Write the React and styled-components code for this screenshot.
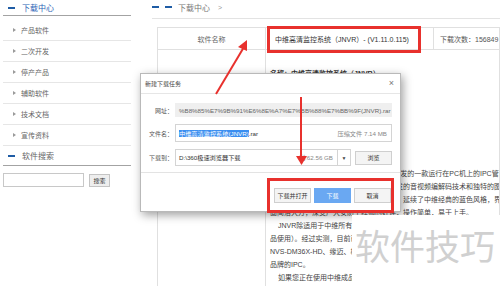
import React from 'react';
import styled, { createGlobalStyle } from 'styled-components';

const FONT = `"Liberation Sans", "Noto Sans CJK SC", sans-serif`;

const Global = createGlobalStyle`
  html, body { margin: 0; padding: 0; background: #fff; }
  body { width: 500px; height: 286px; overflow: hidden; font-family: ${FONT}; }
  * { box-sizing: border-box; }
`;

const Page = styled.div`
  position: relative;
  width: 500px;
  height: 286px;
  overflow: hidden;
  display: flex;
`;

/* ---------- sidebar ---------- */
const Sidebar = styled.aside`
  width: 128px;
  margin-left: 3px;
  flex: none;
  display: flex;
  flex-direction: column;
`;

const SectionHead = styled.div`
  height: ${p => p.$h}px;
  display: flex;
  align-items: center;
  gap: 7px;
  padding-left: 5px;
  border-bottom: 1px solid #a3a3a3;
  font-size: 8px;
  color: ${p => (p.$muted ? '#666' : '#2b63b5')};
`;

const Dash = styled.span`
  display: block;
  width: 7px;
  height: 2px;
  background: #1f5ca5;
  flex: none;
`;

const SideList = styled.ul`
  list-style: none;
  margin: 4px 0 0;
  padding: 0;
`;

const SideItem = styled.li`
  height: 21px;
  border-bottom: 1px solid #e6e6e6;
  display: flex;
  align-items: center;
  gap: 5px;
  padding-left: 10px;
  font-size: 7px;
  color: #666;
`;

const Tri = styled.span`
  width: 0;
  height: 0;
  border-left: 3px solid #9a9a9a;
  border-top: 2px solid transparent;
  border-bottom: 2px solid transparent;
`;

const SearchRow = styled.div`
  margin-top: 7px;
  display: flex;
  align-items: center;
  gap: 5px;
`;

const SearchInput = styled.div`
  width: 81px;
  height: 14px;
  border: 1px solid #c8c8c8;
  background: #fff;
`;

const SearchBtn = styled.div`
  width: 21px;
  height: 13px;
  border: 1px solid #c4c4c4;
  background: #eee;
  font-size: 6px;
  color: #333;
  display: flex;
  align-items: center;
  justify-content: center;
`;

/* ---------- main ---------- */
const Main = styled.main`
  flex: 1;
  min-width: 0;
  margin-left: 21px;
  display: flex;
  flex-direction: column;
`;

const Crumb = styled.div`
  height: 19px;
  padding-bottom: 4px;
  border-bottom: 1px solid #e3e3e3;
  display: flex;
  align-items: center;
  gap: 6px;
  font-size: 8px;
  color: #777;
  flex: none;
`;

const CrumbSep = styled.span`
  margin-left: 2px;
  font-size: 7px;
  color: #999;
`;

const Table = styled.div`
  flex: 1;
  margin: 8px 0 0 5px;
  display: grid;
  grid-template-columns: 108px 168px 1fr;
  grid-template-rows: 22px 1fr;
  border-left: 1px solid #e0e0e0;
  border-top: 1px solid #e0e0e0;
  min-width: 0;
`;

const Cell = styled.div`
  border-right: 1px solid #e0e0e0;
  border-bottom: ${p => (p.$last ? 'none' : '1px solid #e0e0e0')};
  grid-column: ${p => (p.$span ? `span ${p.$span}` : 'auto')};
  display: flex;
  align-items: ${p => (p.$top ? 'flex-start' : 'center')};
  justify-content: ${p => (p.$center ? 'center' : 'flex-start')};
  padding-left: ${p => p.$pl || 0}px;
  font-size: 7px;
  color: ${p => p.$color || '#555'};
  white-space: nowrap;
  overflow: hidden;
  min-width: 0;
`;

const Body = styled.div`
  display: flex;
  flex-direction: column;
  padding-top: 17px;
`;

const Line = styled.div`
  height: 13px;
  line-height: 13px;
  font-size: 7px;
  color: ${p => (p.$bold ? '#333' : '#444')};
  font-weight: ${p => (p.$bold ? 700 : 400)};
  padding-left: ${p => (p.$indent ? 8 : 0)}px;
  white-space: nowrap;
`;

const Desc = styled.div`
  margin-top: 87px;
`;

/* ---------- dialog ---------- */
const Dialog = styled.div`
  position: absolute;
  left: 140px;
  top: 73px;
  width: 261px;
  height: 139px;
  background: #fff;
  border: 1px solid #b9b9b9;
  box-shadow: 2px 3px 9px rgba(0, 0, 0, 0.38);
  display: flex;
  flex-direction: column;
  font-size: 6px;
`;

const DlgTitle = styled.div`
  height: 20px;
  flex: none;
  border-bottom: 1px solid #e6e6e6;
  display: flex;
  align-items: center;
  justify-content: space-between;
  padding: 0 6px 0 4px;
  color: #444;
  font-size: 6px;
`;

const Close = styled.span`
  font-size: 9px;
  color: #777;
  line-height: 1;
`;

const DlgBody = styled.div`
  padding: 9px 8px 6px 0;
  display: flex;
  flex-direction: column;
  gap: 7px;
  border-bottom: 1px solid #e3e3e3;
`;

const FieldRow = styled.div`
  display: flex;
  align-items: center;
  height: ${p => p.$h}px;
`;

const Label = styled.span`
  width: 34px;
  flex: none;
  text-align: right;
  padding-right: 2px;
  color: #555;
  font-size: 6px;
`;

const Field = styled.div`
  flex: 1;
  height: 100%;
  display: flex;
  align-items: center;
  justify-content: space-between;
  padding: 0 4px 0 3px;
  background: ${p => (p.$gray ? '#efefef' : '#fff')};
  border: 1px solid ${p => (p.$gray ? '#efefef' : '#d4d4d4')};
  color: ${p => (p.$gray ? '#666' : '#333')};
  font-size: 6.2px;
  white-space: nowrap;
  overflow: hidden;
`;

const Sel = styled.span`
  background: #3b8ef0;
  color: #fff;
`;

const Hint = styled.span`
  color: #888;
`;

const Drop = styled.div`
  width: 13px;
  height: 100%;
  flex: none;
  border: 1px solid #d4d4d4;
  border-left: none;
  display: flex;
  align-items: center;
  justify-content: center;
  font-size: 5px;
  color: #444;
`;

const Btn = styled.div`
  width: 37px;
  height: ${p => p.$h || 15}px;
  flex: none;
  margin-left: ${p => p.$ml || 0}px;
  display: flex;
  align-items: center;
  justify-content: center;
  font-size: 6px;
  border: 1px solid ${p => (p.$primary ? '#6aa8f2' : '#cfcfcf')};
  background: ${p => (p.$primary ? '#6aa8f2' : '#f4f4f4')};
  color: ${p => (p.$primary ? '#fff' : '#333')};
`;

const DlgFoot = styled.div`
  flex: 1;
  display: flex;
  justify-content: flex-end;
  align-items: flex-start;
  gap: 3px;
  padding: 15px 9px 0 0;
`;

/* ---------- annotations ---------- */
const RedBox = styled.div`
  position: absolute;
  border: 3px solid #e8312d;
  pointer-events: none;
`;

const Overlay = styled.svg`
  position: absolute;
  left: 0;
  top: 0;
  pointer-events: none;
`;

const Watermark = styled.div`
  position: absolute;
  left: 352px;
  top: 215px;
  width: 148px;
  height: 71px;
  background: #fff;
  padding: 10px 0 0 3px;
  font-family: "Noto Sans CJK SC", sans-serif;
  font-size: 35px;
  line-height: 40px;
  color: #d0d0d0;
  white-space: nowrap;
`;

const sideItems = ['产品软件', '二次开发', '停产产品', '辅助软件', '技术文档', '宣传资料'];

export default function App() {
  return (
    <>
      <Global />
      <Page>
        <Sidebar>
          <SectionHead $h={16}>
            <Dash />
            下载中心
          </SectionHead>
          <SideList>
            {sideItems.map(t => (
              <SideItem key={t}>
                <Tri />
                {t}
              </SideItem>
            ))}
          </SideList>
          <SectionHead $h={20} $muted>
            <Dash />
            软件搜索
          </SectionHead>
          <SearchRow>
            <SearchInput />
            <SearchBtn>搜索</SearchBtn>
          </SearchRow>
        </Sidebar>

        <Main>
          <Crumb>
            <Dash />
            <Dash />
            下载中心
            <CrumbSep>&gt;</CrumbSep>
          </Crumb>
          <Table>
            <Cell $center $color="#666">软件名称</Cell>
            <Cell $pl={9} $color="#333">中维高清监控系统（JNVR）- (V1.11.0.115)</Cell>
            <Cell $pl={6}>下载次数：156849</Cell>
            <Cell $last />
            <Cell $span={2} $top $last $pl={4}>
              <Body>
                <Line $bold>名称：中维高清监控系统（JNVR）</Line>
                <Desc>
                  <Line>JNVR是由深圳市中维世纪科技公司自主研发的一款运行在PC机上的IPC管理软件，</Line>
                  <Line>理软件，该软件采用中维世纪公司自主研发的音视频编解码技术和独特的图像处理算法，</Line>
                  <Line>像处理技术，支持多画面预览和录像回放，延续了中维经典的蓝色风格，界面简洁美观。</Line>
                  <Line>面简洁大方，深受广大安防工程师的好评，操作简单，易于上手。</Line>
                  <Line $indent>JNVR除适用于中维所有IPC设备外，还可以兼容</Line>
                  <Line>品使用）。经过实测，目前已支持海康威视、大华、</Line>
                  <Line>NVS-DM36X-HD、缘迈、雄迈等多个</Line>
                  <Line>品牌的IPC。</Line>
                  <Line $indent>如果您正在使用中维成品设备，推荐您下载使用。</Line>
                </Desc>
              </Body>
            </Cell>
          </Table>
        </Main>

        <RedBox style={{ left: 267, top: 26, width: 154, height: 27 }} />

        <Dialog>
          <DlgTitle>
            新建下载任务
            <Close>×</Close>
          </DlgTitle>
          <DlgBody>
            <FieldRow $h={14}>
              <Label>网址：</Label>
              <Field $gray>%B8%85%E7%9B%91%E6%8E%A7%E7%BB%88%E7%BB%9F(JNVR).rar</Field>
            </FieldRow>
            <FieldRow $h={18}>
              <Label>文件名：</Label>
              <Field>
                <span>
                  <Sel>中维高清监控系统(JNVR)</Sel>.rar
                </span>
                <Hint>压缩文件 7.14 MB</Hint>
              </Field>
            </FieldRow>
            <FieldRow $h={17}>
              <Label>下载到：</Label>
              <Field>
                <span>D:\360极速浏览器下载</span>
                <Hint>剩:62.56 GB</Hint>
              </Field>
              <Drop>▼</Drop>
              <Btn $h={14} $ml={4}>浏览</Btn>
            </FieldRow>
          </DlgBody>
          <DlgFoot>
            <Btn>下载并打开</Btn>
            <Btn $primary>下载</Btn>
            <Btn>取消</Btn>
          </DlgFoot>
        </Dialog>

        <RedBox style={{ left: 267, top: 178, width: 127, height: 35 }} />

        <Overlay width="500" height="286" viewBox="0 0 500 286">
          <line x1="216" y1="94" x2="244" y2="47" stroke="#e8312d" strokeWidth="2" />
          <polygon points="247,40 238,47 247,51" fill="#e8312d" />
          <line x1="301" y1="97" x2="301" y2="157" stroke="#e8312d" strokeWidth="2" />
          <polygon points="296,156 307,156 301.5,165" fill="#e8312d" />
        </Overlay>

        <Watermark>软件技巧</Watermark>
      </Page>
    </>
  );
}
